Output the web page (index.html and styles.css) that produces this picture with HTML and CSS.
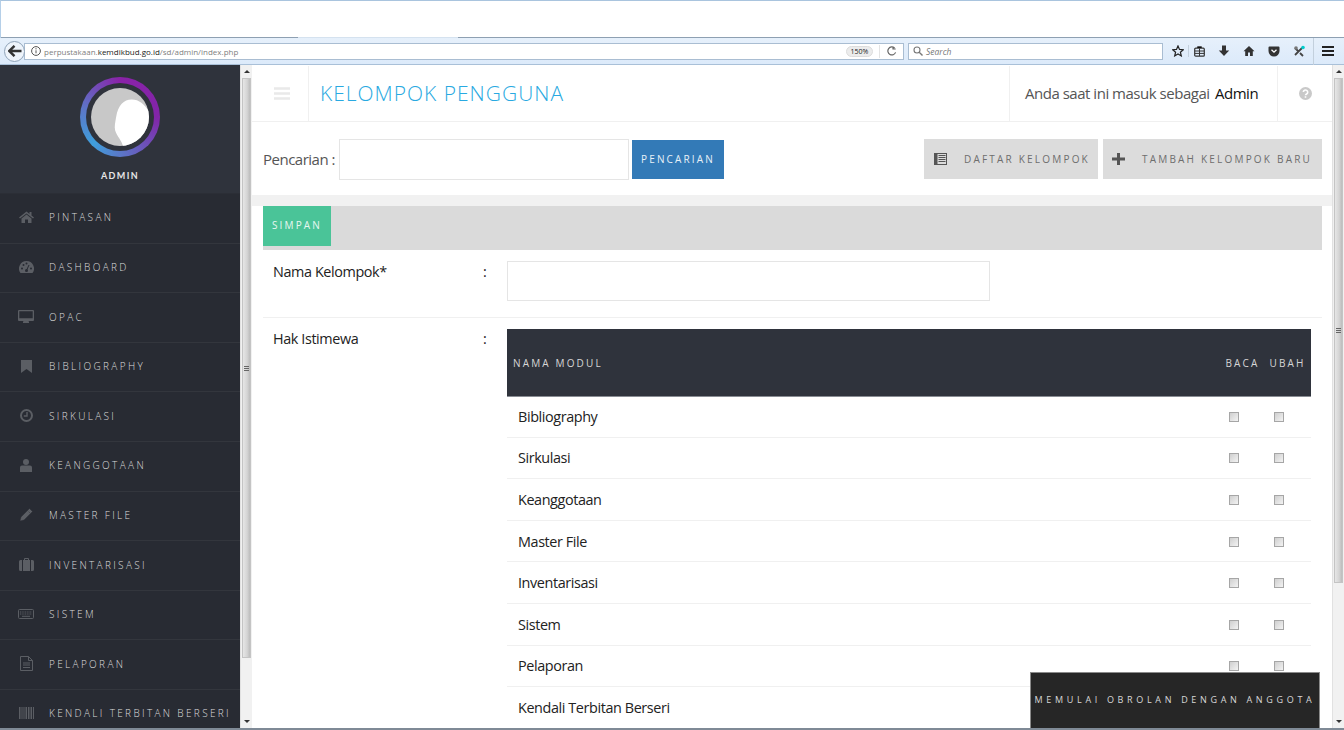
FILE: index.html
```html
<!DOCTYPE html>
<html lang="id">
<head>
<meta charset="utf-8">
<title>Kelompok Pengguna</title>
<link rel="stylesheet" href="styles.css">
</head>
<body>
<div class="tabstrip">
  <div class="tabline dark w298"></div><div class="tabline light w160"></div><div class="tabline dark grow"></div>
</div>
<div class="toolbar">
  <button class="back"><svg width="14" height="12" viewBox="0 0 14 12"><path d="M6.500 .8 1.300 6l5.200 5.200M1.800 6H13.500" fill="none" stroke="#333" stroke-width="2.400"/></svg></button>
  <div class="urlbar">
    <svg class="info" width="10" height="10" viewBox="0 0 10 10"><circle cx="5" cy="5" r="4.400" fill="none" stroke="#555"/><path d="M5 4.300v3M5 2.200v1.200" stroke="#555"/></svg>
    <span class="url">perpustakaan.<b>kemdikbud.go.id</b>/sd/admin/index.php</span>
    <span class="zoompill">150%</span>
    <span class="urlsep"></span>
    <svg class="reload" width="10" height="10" viewBox="0 0 10 10"><path d="M8.600 6.400A4 4 0 1 1 7.600 2M6 .4V3h2.700" fill="none" stroke="#666" stroke-width="1.200"/></svg>
  </div>
  <div class="searchbar">
    <svg width="10" height="10" viewBox="0 0 10 10"><circle cx="4" cy="4" r="3" fill="none" stroke="#777" stroke-width="1.100"/><path d="m6.200 6.200 3.300 3.300" stroke="#777" stroke-width="1.400"/></svg>
    <i>Search</i>
  </div>
  <div class="tbicons">
    <svg width="12" height="12" viewBox="0 0 12 12"><path d="M6 .9 7.500 4.400l3.800.3-2.900 2.500.9 3.700L6 9l-3.300 1.900.9-3.700L.7 4.700l3.800-.3z" fill="none" stroke="#222" stroke-width="1.200"/></svg>
    <span class="tbsep"></span>
    <svg width="11" height="11" viewBox="0 0 11 11"><rect x=".7" y="2.200" width="9.600" height="8" rx="1" fill="none" stroke="#333" stroke-width="1.200"/><path d="M3.500 2V.8h4V2M1 5h9M1 7.400h9M5.500 2.500v7.500" stroke="#333"/></svg>
    <svg width="12" height="12" viewBox="0 0 12 12"><path d="M4 .5h4v5h3.200L6 11 .8 5.500H4z" fill="#333"/></svg>
    <svg width="12" height="12" viewBox="0 0 12 12"><path d="M6 1 .5 6.200h1.700V11h2.800V7.500h2V11h2.800V6.200h1.700z" fill="#333"/></svg>
    <svg width="12" height="11" viewBox="0 0 12 11"><path d="M1.500.5h9A1 1 0 0 1 11.500 1.500V5A5.500 5.500 0 0 1 .5 5V1.500a1 1 0 0 1 1-1z" fill="#333"/><path d="M3.500 3.800 6 6.200l2.500-2.400" fill="none" stroke="#fff" stroke-width="1.300"/></svg>
    <svg width="13" height="12" viewBox="0 0 13 12"><path d="M2 10 9 3M2 3l3 3M7 8l3 3" stroke="#444" stroke-width="1.800"/><circle cx="3" cy="3" r="1.800" fill="#777"/><circle cx="10" cy="2.500" r="1.800" fill="#0cc"/></svg>
    <span class="tbsep wide"></span>
    <svg width="12" height="10" viewBox="0 0 12 10"><path d="M0 1h12M0 5h12M0 9h12" stroke="#222" stroke-width="2"/></svg>
  </div>
</div>
<div class="app">
  <aside class="sidebar">
    <div class="profile">
      <div class="ring"><div class="ring-inner"><svg width="60" height="60" viewBox="0 0 60 60"><rect width="60" height="60" fill="#c8c8c8"/><path d="M33 60C32 55 27 50 25 44 24 40 25 36 26 30 28 18 34 12 42 12 50 12 55 17 60 24V60z" fill="#fff"/></svg></div></div>
      <div class="admin">ADMIN</div>
    </div>
    <nav class="menu">
      <a class="item"><span class="ic"><svg width="15" height="12" viewBox="0 0 15 12"><path d="M7.500.5 0 6.500l1 1 6.500-5 6.500 5 1-1-2.500-2V1h-2v2zM2.500 7.500V12h3.500V8.500h3V12h3.500V7.500l-5-4z" fill="#5b5e64"/></svg></span>PINTASAN</a>
      <a class="item"><span class="ic"><svg width="15" height="12" viewBox="0 0 15 12"><path d="M7.500 0A7.500 7.500 0 0 0 1.500 12h12A7.500 7.500 0 0 0 7.500 0z" fill="#5b5e64"/><circle cx="3" cy="7.500" r="1" fill="#282b33"/><circle cx="4.500" cy="4" r="1" fill="#282b33"/><circle cx="7.500" cy="2.500" r="1" fill="#282b33"/><circle cx="12" cy="7.500" r="1" fill="#282b33"/><circle cx="7.500" cy="9.500" r="1.500" fill="#282b33"/><path d="M7.500 9.500 10 4" stroke="#282b33"/></svg></span>DASHBOARD</a>
      <a class="item"><span class="ic"><svg width="16" height="13" viewBox="0 0 16 13"><path d="M1 0h14a1 1 0 0 1 1 1v9a1 1 0 0 1-1 1h-4.500l.5 1v1H5v-1l.5-1H1a1 1 0 0 1-1-1V1a1 1 0 0 1 1-1zm.3 1.300v7h13.400v-7z" fill="#5b5e64"/></svg></span>OPAC</a>
      <a class="item"><span class="ic"><svg width="11" height="13" viewBox="0 0 11 13"><path d="M0 0h11v13L5.500 9 0 13z" fill="#5b5e64"/></svg></span>BIBLIOGRAPHY</a>
      <a class="item"><span class="ic"><svg width="13" height="13" viewBox="0 0 13 13"><circle cx="6.500" cy="6.500" r="5.500" fill="none" stroke="#5b5e64" stroke-width="2"/><path d="M7 3v4H3.800" fill="none" stroke="#5b5e64" stroke-width="1.400"/></svg></span>SIRKULASI</a>
      <a class="item"><span class="ic"><svg width="12" height="13" viewBox="0 0 12 13"><circle cx="6" cy="3" r="3" fill="#5b5e64"/><path d="M2 6.500h8a2 2 0 0 1 2 2V13H0V8.500a2 2 0 0 1 2-2z" fill="#5b5e64"/></svg></span>KEANGGOTAAN</a>
      <a class="item"><span class="ic"><svg width="13" height="13" viewBox="0 0 13 13"><path d="M9.500.5 12.500 3.500 4 12 0 13l1-4zM8.500 3.500 10 5" fill="#5b5e64" stroke="#282b33" stroke-width=".4"/></svg></span>MASTER FILE</a>
      <a class="item"><span class="ic"><svg width="15" height="13" viewBox="0 0 15 13"><path d="M5 2V1a1 1 0 0 1 1-1h3a1 1 0 0 1 1 1v1h1v11H4V2zm1 0h3V1H6zM0 3.500A1.500 1.500 0 0 1 1.500 2H3v11H1.500A1.500 1.500 0 0 1 0 11.500zM12 2h1.500A1.500 1.500 0 0 1 15 3.500v8a1.500 1.500 0 0 1-1.500 1.500H12z" fill="#5b5e64"/></svg></span>INVENTARISASI</a>
      <a class="item"><span class="ic"><svg width="16" height="10" viewBox="0 0 16 10"><rect x=".5" y=".5" width="15" height="9" rx="1" fill="none" stroke="#5b5e64"/><path d="M2 3h12M2 5h12" stroke="#5b5e64" stroke-dasharray="1 .7"/><path d="M4 7.300h8" stroke="#5b5e64"/></svg></span>SISTEM</a>
      <a class="item"><span class="ic"><svg width="13" height="15" viewBox="0 0 13 15"><path d="M.5.500h8l4 4v10H.5zM8.500.500v4h4M3 7h7M3 9h7M3 11.500h7" fill="none" stroke="#5b5e64"/></svg></span>PELAPORAN</a>
      <a class="item"><span class="ic"><svg width="15" height="12" viewBox="0 0 15 12"><path d="M.5 0v12M2 0v12M4 0v12M6 0v12M7.500 0v12M9.500 0v12M11 0v12M12.500 0v12M14.500 0v12" stroke="#5b5e64"/></svg></span>KENDALI TERBITAN BERSERI</a>
    </nav>
  </aside>
  <div class="scrollbar">
    <span class="arrow up"></span>
    <div class="thumb left"><span class="grip"></span></div>
    <span class="arrow down"></span>
  </div>
  <main class="main">
    <header class="topbar">
      <div class="burger"><svg width="16" height="13" viewBox="0 0 16 13"><path d="M0 1.500h16M0 6.500h16M0 11.500h16" stroke="#e9e9e9" stroke-width="2.600"/></svg></div>
      <h1 class="title">KELOMPOK PENGGUNA</h1>
      <div class="who">Anda saat ini masuk sebagai <b>Admin</b></div>
      <div class="help"><svg width="13" height="13" viewBox="0 0 13 13"><circle cx="6.500" cy="6.500" r="6.500" fill="#c9c9c9"/><path d="M4.300 5A2.200 2.100 0 1 1 7.600 7c-.8.500-1.100.8-1.100 1.300M6.500 9.300v1.500" fill="none" stroke="#fff" stroke-width="1.600"/></svg></div>
    </header>
    <section class="searchrow">
      <label class="searchlabel">Pencarian :</label>
      <div class="input searchinput"></div>
      <button class="btn-search">PENCARIAN</button>
      <div class="spacer"></div>
      <button class="btn-gray list"><svg width="13" height="12" viewBox="0 0 13 12"><rect x=".5" y=".5" width="12" height="11" fill="none" stroke="#555"/><path d="M1 1h2.500v10H1z" fill="#555"/><path d="M4.500 2.500h7M4.500 4.500h7M4.500 6.500h7M4.500 8.500h7" stroke="#555"/></svg>DAFTAR KELOMPOK</button>
      <button class="btn-gray plus"><svg width="13" height="12" viewBox="0 0 13 12"><path d="M5 0h3v4.500h5v3H8V12H5V7.500H0v-3h5z" fill="#555"/></svg>TAMBAH KELOMPOK BARU</button>
    </section>
    <div class="band"></div>
    <section class="panel">
      <div class="actions"><button class="btn-save">SIMPAN</button></div>
      <div class="formrow first">
        <div class="flabel">Nama Kelompok*</div>
        <div class="colon">:</div>
        <div class="input nameinput"></div>
      </div>
      <div class="formrow second">
        <div class="flabel">Hak Istimewa</div>
        <div class="colon">:</div>
        <div class="tablewrap">
          <div class="thead"><span class="tname">NAMA MODUL</span><span class="tc">BACA</span><span class="tc">UBAH</span></div>
          <div class="trow"><span class="tname">Bibliography</span><span class="tc"><i class="cb"></i></span><span class="tc"><i class="cb"></i></span></div>
          <div class="trow"><span class="tname">Sirkulasi</span><span class="tc"><i class="cb"></i></span><span class="tc"><i class="cb"></i></span></div>
          <div class="trow"><span class="tname">Keanggotaan</span><span class="tc"><i class="cb"></i></span><span class="tc"><i class="cb"></i></span></div>
          <div class="trow"><span class="tname">Master File</span><span class="tc"><i class="cb"></i></span><span class="tc"><i class="cb"></i></span></div>
          <div class="trow"><span class="tname">Inventarisasi</span><span class="tc"><i class="cb"></i></span><span class="tc"><i class="cb"></i></span></div>
          <div class="trow"><span class="tname">Sistem</span><span class="tc"><i class="cb"></i></span><span class="tc"><i class="cb"></i></span></div>
          <div class="trow"><span class="tname">Pelaporan</span><span class="tc"><i class="cb"></i></span><span class="tc"><i class="cb"></i></span></div>
          <div class="trow"><span class="tname">Kendali Terbitan Berseri</span><span class="tc"><i class="cb"></i></span><span class="tc"><i class="cb"></i></span></div>
        </div>
      </div>
    </section>
    <div class="chat">MEMULAI OBROLAN DENGAN ANGGOTA</div>
  </main>
  <div class="scrollbar">
    <span class="arrow up"></span>
    <div class="thumb right"><span class="grip"></span></div>
    <span class="arrow down"></span>
  </div>
</div>
</body>
</html>
```
FILE: styles.css
```css
* { box-sizing: border-box; }
html, body { margin: 0; height: 100%; overflow: hidden; }
body { display: flex; flex-direction: column; width: 1344px; height: 730px; background: #7f8a96; font-family: "Open Sans", "Liberation Sans", sans-serif; color: #333; }
button { font-family: inherit; border: 0; padding: 0; margin: 0; }

.tabstrip { height: 38px; flex: none; background: #fff; border-top: 1px solid #a9c4de; border-left: 1px solid #b5cfe8; display: flex; align-items: flex-end; }
.tabline { height: 1px; }
.tabline.dark { background: #8ea0b2; }
.tabline.light { background: #d5e2ef; }
.w298 { width: 297px; }
.w160 { width: 160px; }
.grow { flex: 1; }

.toolbar { height: 27px; flex: none; background: linear-gradient(#e6f0fb, #dceafa); border-bottom: 1px solid #a9c0d8; display: flex; align-items: center; position: relative; padding-left: 4px; }
.back { width: 21px; height: 21px; border-radius: 50%; border: 1px solid #8fa3b8; background: #eef4fb; display: flex; align-items: center; justify-content: center; flex: none; position: relative; z-index: 1; }
.urlbar { width: 880px; height: 17px; margin-left: -1px; background: #fff; border: 1px solid #a9bdd2; display: flex; align-items: center; padding-left: 6px; font-size: 8px; flex: none; }
.info { flex: none; }
.url { margin-left: 3px; color: #808080; flex: 1; white-space: nowrap; }
.url b { color: #1a1a1a; font-weight: 400; }
.zoompill { width: 27px; height: 11px; line-height: 10px; border-radius: 6px; background: #ececec; border: 1px solid #ddd; font-size: 7px; text-align: center; color: #222; flex: none; }
.urlsep { width: 1px; height: 13px; background: #e4e4e4; margin-left: 6px; flex: none; }
.reload { margin: 0 6px 0 7px; flex: none; }
.searchbar { width: 255px; height: 17px; margin-left: 4px; background: #fff; border: 1px solid #a9bdd2; display: flex; align-items: center; padding-left: 4px; gap: 3px; font-size: 8.500px; color: #777; flex: none; }
.tbicons { display: flex; align-items: center; margin-left: 9px; gap: 13px; flex: none; }
.tbsep { width: 1px; height: 12px; background: #c3d0dd; margin: 0 -8px 0 -9px; }
.tbsep.wide { height: 27px; margin: 0 -5px 0 -6px; }

.app { flex: 1; height: 663px; max-height: 663px; display: flex; overflow: hidden; }

.sidebar { width: 240px; flex: none; background: #282b33; display: flex; flex-direction: column; overflow: hidden; }
.profile { height: 129px; flex: none; background: #2f333c; display: flex; flex-direction: column; align-items: center; border-bottom: 1px solid #2b2e36; }
.ring { width: 80px; height: 80px; margin-top: 12px; border-radius: 50%; background: conic-gradient(#8a22a8 0deg, #8225a8 90deg, #5a78c8 180deg, #3f9fdc 225deg, #5a78c8 280deg, #8a22a8 360deg); display: flex; align-items: center; justify-content: center; }
.ring-inner { width: 68px; height: 68px; border-radius: 50%; background: #2f333c; display: flex; align-items: center; justify-content: center; }
.ring-inner svg { display: block; width: 58px; height: 58px; border-radius: 50%; }
.admin { margin-top: 13px; font-size: 9px; font-weight: 700; line-height: 12px; letter-spacing: 1.400px; color: #e6e6e6; font-family: "Lato", sans-serif; }
.menu { display: flex; flex-direction: column; }
.item { height: 49.620px; flex: none; display: flex; align-items: center; border-bottom: 1px solid #33363d; font-size: 10px; font-weight: 300; letter-spacing: 2.350px; color: #dcdcdc; font-family: "Open Sans", sans-serif; white-space: nowrap; padding-bottom: 2px; }
.ic { width: 49px; padding: 0 15px 0 18px; flex: none; display: flex; justify-content: center; }
.ic svg { display: block; flex: none; }

.scrollbar { width: 12px; flex: none; background: #f1f1f1; border-left: 1px solid #e1e1e1; display: flex; flex-direction: column; position: relative; padding: 0 1px; }
.arrow { position: absolute; left: 3px; width: 0; height: 0; border-left: 3px solid transparent; border-right: 3px solid transparent; }
.arrow.up { top: 5px; border-bottom: 3px solid #333; }
.arrow.down { bottom: 5px; border-top: 3px solid #333; }
.thumb { margin-top: 13px; background: linear-gradient(90deg, #e6e6e6, #d4d4d4 60%, #bcbcbc); border: 1px solid #c4c4c4; display: flex; align-items: center; justify-content: center; }
.thumb.left { height: 580px; }
.thumb.right { height: 505px; }
.grip { width: 5px; height: 5px; border-top: 1px solid #666; border-bottom: 1px solid #666; background: linear-gradient(transparent 1px, #666 1px, #666 2px, transparent 2px); }

.main { flex: 1; min-width: 0; background: #fff; position: relative; overflow: hidden; display: flex; flex-direction: column; }
.topbar { height: 57px; flex: none; display: flex; align-items: center; border-bottom: 1px solid #f0f0f0; }
.burger { width: 57px; height: 55px; border-right: 1px solid #f0f0f0; display: flex; align-items: center; justify-content: center; padding-left: 3px; flex: none; }
.title { margin: 0 0 0 11px; flex: 1; font-size: 21px; font-weight: 300; letter-spacing: 1px; color: #29a9e1; white-space: nowrap; }
.who { width: 268px; height: 55px; border-left: 1px solid #f0f0f0; display: flex; align-items: center; padding-left: 15px; font-size: 15px; letter-spacing: -.48px; color: #555; white-space: pre; flex: none; }
.who b { font-weight: 400; color: #111; margin-left: 2px; }
.help { width: 55px; height: 55px; border-left: 1px solid #f0f0f0; display: flex; align-items: center; justify-content: center; flex: none; }

.searchrow { height: 73px; flex: none; display: flex; align-items: center; padding: 0 10px 0 11px; }
.searchlabel { font-size: 15px; letter-spacing: -.5px; color: #555; white-space: nowrap; width: 76px; flex: none; }
.input { background: #fff; border: 1px solid #e5e5e5; flex: none; }
.searchinput { width: 290px; height: 41px; margin-top: 2px; }
.btn-search { width: 92px; height: 39px; margin-left: 3px; margin-top: 2px; padding-bottom: 2px; background: #337ab7; color: #e8f1f8; font-size: 10px; letter-spacing: 2.150px; flex: none; }
.spacer { flex: 1; }
.btn-gray { height: 40px; background: #dcdcdc; color: #6e6e6e; font-size: 10px; letter-spacing: 2.200px; display: flex; align-items: center; flex: none; white-space: nowrap; padding-left: 10px; }
.btn-gray svg { flex: none; margin-right: 17px; }
.btn-gray.list { width: 174px; }
.btn-gray.plus { width: 219px; margin-left: 5px; padding-left: 9px; }

.band { height: 11px; flex: none; background: #f1f1f1; }
.panel { margin: 0 10px 0 11px; flex: none; }
.actions { height: 44px; background: #dadada; }
.btn-save { display: block; width: 68px; height: 40px; padding-bottom: 2px; background: #4ac498; color: #e6f7f0; font-size: 10px; letter-spacing: 2.150px; }
.formrow { display: flex; align-items: flex-start; padding-left: 10px; padding-right: 11px; }
.formrow.first { height: 68px; padding-top: 11px; border-bottom: 1px solid #f0f0f0; }
.formrow.first .flabel, .formrow.first .colon { padding-top: 1px; }
.formrow.second { padding-top: 11px; }
.flabel { width: 210px; font-size: 14.400px; letter-spacing: -.4px; line-height: 20px; color: #222; flex: none; white-space: nowrap; }
.colon { width: 24px; font-size: 14.400px; line-height: 20px; color: #222; flex: none; }
.nameinput { width: 483px; height: 40px; }
.tablewrap { flex: 1; min-width: 0; }
.thead { height: 68px; margin-bottom: -1px; background: #2f333c; border-bottom: 1px solid #888c93; display: flex; align-items: center; padding-left: 6px; padding-right: 1px; font-size: 10px; letter-spacing: 2.150px; color: #d6d6d6; }
.trow { height: 41.600px; display: flex; align-items: center; padding-left: 11px; padding-right: 10px; border-bottom: 1px solid #f0f0f0; font-size: 14.400px; letter-spacing: -.4px; color: #222; }
.tname { flex: 1; white-space: nowrap; }
.tc { width: 45px; flex: none; text-align: center; display: flex; justify-content: center; }
.thead .tc { white-space: nowrap; }
.cb { display: block; width: 10px; height: 10px; margin-top: 1px; border: 1px solid #a6a6a6; background: linear-gradient(135deg, #cfcfcf, #f3f3f3); }

.chat { position: absolute; right: 12px; bottom: 0; width: 290px; height: 56px; padding-bottom: 2px; background: #262626; border: 1px solid #8a8a8a; border-bottom: 0; display: flex; align-items: center; justify-content: center; color: #d8d8d8; font-size: 9px; letter-spacing: 3.670px; white-space: nowrap; }
```
